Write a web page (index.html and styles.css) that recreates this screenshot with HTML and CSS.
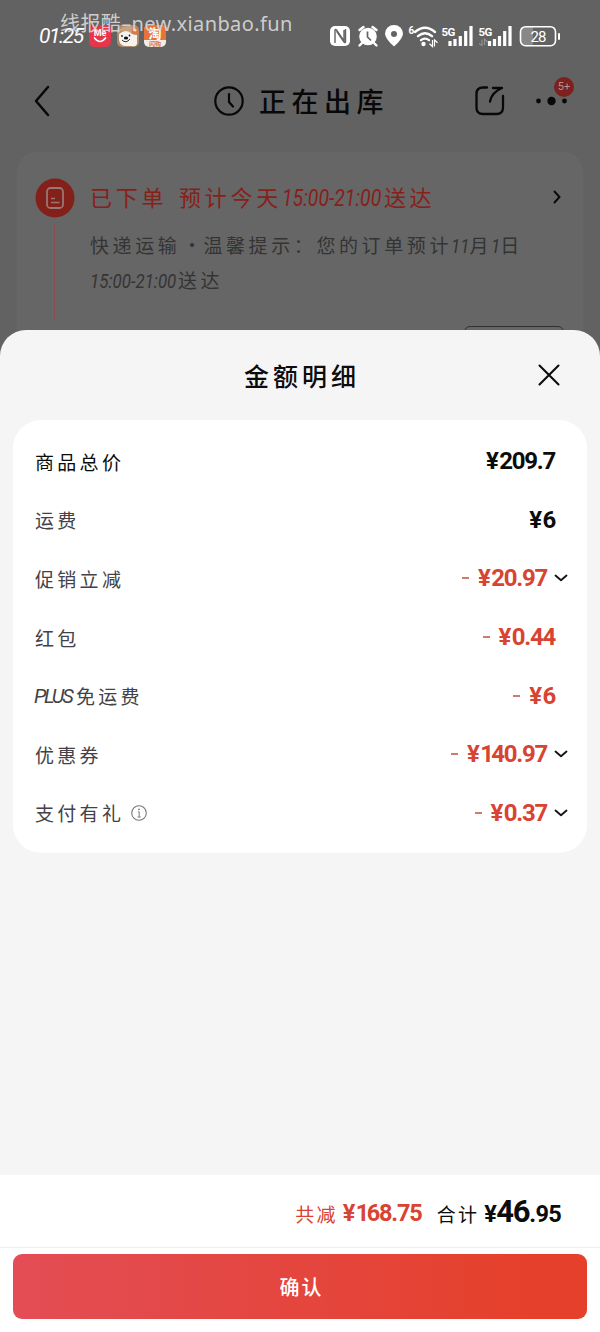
FILE: index.html
```
<!DOCTYPE html>
<html lang="zh-CN">
<head>
<meta charset="utf-8">
<title>金额明细</title>
<link rel="stylesheet" href="styles.css">
</head>
<body>
<div class="page">
  <div class="backdrop">
    <div class="status">
      <span class="time">01:25</span>
      <svg class="app" viewBox="0 0 22 22"><rect width="22" height="22" rx="5" fill="#e5364a"/><path d="M5.500 13q5.500 7 11 0" fill="none" stroke="#fff" stroke-width="1.700" stroke-linecap="round"/><text x="11" y="11" text-anchor="middle" class="t-me">Me</text></svg>
      <svg class="app app-dog" viewBox="0 0 22 22"><rect width="22" height="22" rx="5" fill="#ae8a68"/><path d="M1 7Q4 0 14 1l5 5-3 3Q8 4 1 7z" fill="#c7a37f"/><path d="M2 9q7-6 13 0l5 1v9q-1 3-5 2H9Q3 21 2 15z" fill="#f5f3ef"/><circle cx="18" cy="6" r="3.500" fill="#dc7846"/><circle cx="18" cy="5" r="1.500" fill="#f2d9b8"/><ellipse cx="9" cy="13" rx="2.200" ry="1.500" fill="#111"/><circle cx="5" cy="11" r=".9" fill="#222"/><circle cx="12.500" cy="10.500" r=".9" fill="#222"/><path d="M5 15q4 4 8-1" stroke="#333" fill="none"/></svg>
      <svg class="app" viewBox="0 0 22 22"><rect width="22" height="22" rx="5" fill="#f4ece5"/><path d="M0 15V5q0-5 5-5h12q5 0 5 5v10z" fill="#e8733a"/><text x="11" y="12.500" text-anchor="middle" class="t-tao">淘</text><text x="11" y="20.500" text-anchor="middle" class="t-flash">闪购</text></svg>
      <svg class="signals" viewBox="0 0 236 28">
        <g fill="#fff">
          <rect x="1" y="4" width="20" height="20" rx="5"/>
          <path d="M6 21V8.500q0-2 1.500-.5l7.500 11V8M16.500 7v12.500q0 2-1.500.5L7.500 9" fill="none" stroke="#636363" stroke-width="1.400"/>
          <circle cx="39" cy="14.500" r="8.800"/>
          <path d="M30.500 8l4-3M47.500 8l-4-3M33 21l-2.500 2.500M45 21l2.500 2.500" stroke="#fff" stroke-width="2.400" stroke-linecap="round"/>
          <path d="M38.500 9.500v5.500l3.500 3.500" fill="none" stroke="#636363" stroke-width="1.700"/>
          <path d="M65 24.500q-9-8-9-13a9 8.500 0 0 1 18 0q0 5-9 13z"/><circle cx="65" cy="12" r="3" fill="#636363"/>
          <text x="79.500" y="12" class="t-six">6</text>
          <path d="M86 10q10-8.500 20 0M89 14.200q7-6 14 0M92 18.200q4-3.200 8 0" fill="none" stroke="#fff" stroke-width="2.300" stroke-linecap="round"/>
          <circle cx="94.500" cy="22" r="2.200"/><path d="M103.500 18v6.500l-3-2.800M105.500 24.500V18l3 2.800" fill="none" stroke="#fff" stroke-width="1.200"/>
          <text x="112.500" y="13.500" class="t-5g">5G</text>
          <path d="M121 24v-5M126 24v-7M131.300 24V14M136.700 24v-15M142 24V4" stroke="#fff" stroke-width="3.200"/>
          <text x="149.500" y="13.500" class="t-5g">5G</text>
          <path d="M160.500 24v-5M165.500 24v-7M170.500 24V14M175.700 24v-15M181 24V4" stroke="#fff" stroke-width="3.200"/>
          <path d="M153 17.500v6l-3-2M155.500 23v-6l3 3" fill="none" stroke="#929292" stroke-width="1.200"/>
          <path d="M196 5h8v18h-8q-4 0-4-4V9q0-4 4-4z" fill="#888"/>
          <rect x="191.500" y="4.700" width="35" height="19" rx="5" fill="none" stroke="#fff" stroke-width="1.600"/>
          <rect x="229" y="11" width="2" height="7" rx="1"/>
          <text x="209" y="20" text-anchor="middle" class="t-battery">28</text>
        </g>
      </svg>
    </div>
    <div class="watermark">线报酷–new.xianbao.fun</div>
    <header class="nav">
      <svg class="back" viewBox="0 0 16 32"><path d="M14 2L2 16l12 14" fill="none" stroke="#080808" stroke-width="2.500" stroke-linecap="round" stroke-linejoin="round"/></svg>
      <svg class="clock" viewBox="0 0 30 30"><circle cx="15" cy="15" r="13.700" fill="none" stroke="#080808" stroke-width="2.200"/><path d="M15 8v8l4 4.500" fill="none" stroke="#080808" stroke-width="2.200" stroke-linecap="round"/></svg>
      <h1 class="nav-title">正在出库</h1>
      <svg class="share" viewBox="0 0 30 30"><path d="M12 1.500H8Q1.500 1.500 1.500 8v13.500Q1.500 28 8 28h13.500Q28 28 28 21.500V10M18 2H27Q17 6 15 15.500" fill="none" stroke="#080808" stroke-width="2.300" stroke-linecap="round" stroke-linejoin="round"/></svg>
      <div class="more"><svg viewBox="0 0 34 10"><circle cx="3.500" cy="5" r="2.400"/><circle cx="16.500" cy="5" r="4.200"/><circle cx="29.500" cy="5" r="2.400"/></svg><span class="badge">5+</span></div>
    </header>
    <section class="order">
      <div class="rail">
        <svg class="order-icon" viewBox="0 0 40 40"><circle cx="20" cy="20" r="19.500" fill="#822019"/><rect x="12" y="10" width="16" height="20" rx="3.500" fill="none" stroke="#997774" stroke-width="1.800"/><path d="M16 20.500h4M16 24.500h8.500" stroke="#997774" stroke-width="1.700"/></svg>
        <div class="rail-line"></div>
      </div>
      <div class="order-body">
        <div class="order-title">已下单<span class="space"></span>预计今天<span class="num">15:00-21:00</span>送达</div>
        <div class="order-text">快递运输<span class="dot">·</span>温馨提示：您的订单预计<span class="num month">11</span>月<span class="num day">1</span>日<br><span class="num range">15:00-21:00</span>送达</div>
        <div class="order-action"></div>
      </div>
      <svg class="go" viewBox="0 0 8 14"><path d="M1.500 1.500L6.500 7l-5 5.500" fill="none" stroke="#080808" stroke-width="1.900" stroke-linecap="round"/></svg>
    </section>
  </div>

  <main class="sheet">
    <div class="sheet-head">
      <h2 class="sheet-title">金额明细</h2>
      <svg class="close" viewBox="0 0 22 22"><path d="M1.500 1.500l19 19M20.500 1.500l-19 19" stroke="#0c0c0c" stroke-width="2.100" stroke-linecap="round"/></svg>
    </div>
    <div class="card">
      <div class="row first"><span class="label">商品总价</span><span class="amount"><span class="yen">¥</span>209.7</span></div>
      <div class="row"><span class="label">运费</span><span class="amount"><span class="yen">¥</span>6</span></div>
      <div class="row off fold"><span class="label">促销立减</span><i class="minus"></i><span class="amount"><span class="yen">¥</span>20.97</span><svg class="down" viewBox="0 0 14 8"><path d="M1.500 1.500L7 6.200l5.500-4.700" /></svg></div>
      <div class="row off"><span class="label">红包</span><i class="minus"></i><span class="amount"><span class="yen">¥</span>0.44</span></div>
      <div class="row off"><span class="label"><span class="plus">PLUS</span>免运费</span><i class="minus"></i><span class="amount"><span class="yen">¥</span>6</span></div>
      <div class="row off fold"><span class="label">优惠券</span><i class="minus"></i><span class="amount"><span class="yen">¥</span><span class="one">1</span>40.97</span><svg class="down" viewBox="0 0 14 8"><path d="M1.500 1.500L7 6.200l5.500-4.700" /></svg></div>
      <div class="row off fold"><span class="label">支付有礼<svg class="info" viewBox="0 0 16 16"><circle cx="8" cy="8" r="7.300" fill="none" stroke="#77777b" stroke-width="1.100"/><path d="M7 6.800h1.200v5M6.500 12h3.200" fill="none" stroke="#77777b"/><circle cx="8" cy="4.300" r=".9" fill="#77777b"/></svg></span><i class="minus"></i><span class="amount"><span class="yen">¥</span>0.37</span><svg class="down" viewBox="0 0 14 8"><path d="M1.500 1.500L7 6.200l5.500-4.700" /></svg></div>
    </div>
  </main>
  <footer class="footer">
    <div class="totals">
      <span class="sum-label saved">共减</span><span class="sum saved"><span class="yen">¥</span><span class="one">1</span>68.75</span>
      <span class="sum-label total">合计</span><span class="sum">¥<span class="big">46</span>.95</span>
    </div>
    <div class="confirm-wrap"><button class="confirm">确认</button></div>
  </footer>
</div>
</body>
</html>
```
FILE: styles.css
```
* { box-sizing: border-box; }
body { margin: 0; font-family: "Noto Sans CJK SC", sans-serif; color: #0c0c0c; }
h1, h2 { margin: 0; font-weight: 500; }
svg { display: block; flex: none; }
.page { width: 600px; height: 1332px; display: flex; flex-direction: column; overflow: hidden; background: #f5f5f5; }

/* dimmed order page */
.backdrop { position: relative; flex: none; height: 360px; background: #626262; overflow: hidden; }
.status { display: flex; align-items: center; height: 50px; padding: 22px 0 0 39px; }
.time { width: 50px; font: italic 21px/28px Roboto, sans-serif; letter-spacing: -1.4px; color: #fff; }
.app { width: 22px; height: 22px; margin-right: 5.500px; }
.signals { width: 236px; height: 28px; margin-left: 157px; }
.t-me { font: bold 9px Roboto, sans-serif; fill: #fff; }
.t-tao { font: bold 13px "Noto Sans CJK SC", sans-serif; fill: #fff; }
.t-flash { font: bold 6px "Noto Sans CJK SC", sans-serif; fill: #d9773f; }
.t-six { font: bold 10px Roboto, sans-serif; }
.t-5g { font: bold 11.500px Roboto, sans-serif; letter-spacing: -.7px; }
.t-battery { font: 15px Roboto, sans-serif; letter-spacing: -1px; }
.watermark { position: absolute; left: 60px; top: 9px; font: 20px/30px "Noto Sans", "Noto Sans CJK SC", sans-serif; letter-spacing: .38px; color: rgba(220, 220, 220, .9); white-space: nowrap; }
.nav { display: flex; align-items: center; height: 102px; padding-left: 34px; }
.back { width: 16px; height: 32px; }
.clock { width: 30px; height: 30px; margin-left: 164px; }
.nav-title { width: 216px; margin-left: 15px; font-size: 27px; line-height: 40px; letter-spacing: 5.500px; color: #080808; }
.share { width: 30px; height: 30px; }
.more { position: relative; width: 34px; margin-left: 30px; }
.more svg { width: 34px; height: 10px; fill: #080808; }
.badge { position: absolute; left: 19px; top: -19px; width: 20px; height: 20px; border-radius: 10px; background: #7c211e; color: #b39391; font: 11px/20px Roboto, sans-serif; text-align: center; }
.order { display: flex; height: 230px; margin: 0 17px; border-radius: 20px; background: #666; }
.rail { flex: none; width: 40px; margin: 26px 0 0 18px; display: flex; flex-direction: column; align-items: center; }
.order-icon { width: 40px; height: 40px; }
.rail-line { flex: none; width: 1px; height: 97px; margin: 5px 1px 0 0; background: #85504d; }
.order-body { flex: none; width: 450px; padding: 25px 0 0 15px; white-space: nowrap; }
.order-title { font-size: 22px; line-height: 38px; letter-spacing: 3.700px; color: #88201a; }
.space { display: inline-block; width: 12px; }
.num { display: inline-block; font: italic 20px Roboto, sans-serif; letter-spacing: 0; transform: scaleX(.845); transform-origin: 0 50%; }
.order-title .num { width: 102px; font-size: 23px; }
.order-text { margin-top: 12px; font-size: 19px; line-height: 35px; letter-spacing: 3.600px; color: #343434; }
.month { width: 18.500px; margin-left: -1px; }
.day { width: 9px; margin-left: -1px; }
.range { width: 88px; }
.order-text .dot { display: inline-block; width: 23px; text-align: center; letter-spacing: 0; }
.order-action { width: 100px; height: 40px; margin: 29px 0 0 374px; border: 1.500px solid #303030; border-radius: 6px; }
.go { width: 8px; height: 14px; margin: 38px 0 0 -4px; margin-left: 13px; transform: none; }
.order .go { margin-left: auto; margin-right: 22px; }
.order-body { margin-right: -20px; }

/* amount sheet */
.sheet { position: relative; flex: 1; margin-top: -30px; border-radius: 26px 26px 0 0; background: #f5f5f5; padding: 0 13px; }
.sheet-head { display: flex; justify-content: flex-end; align-items: center; height: 90px; padding-right: 27px; }
.sheet-title { width: 294px; font-size: 25px; letter-spacing: 4px; }
.close { width: 22px; height: 22px; }
.card { height: 433px; padding: 12px 32px 0 22px; border-radius: 28px; background: #fff; }
.row { display: flex; align-items: center; height: 58.600px; }
.row.fold { margin-right: -13px; }
.label { display: flex; align-items: center; margin-right: auto; font-size: 19px; letter-spacing: 3.300px; color: #424247; }
.first .label { color: #0c0c0c; }
.plus { width: 42px; margin-left: -1px; font: italic 20px Roboto, sans-serif; letter-spacing: -2.200px; }
.amount { font: bold 24px/30px Roboto, sans-serif; letter-spacing: -1.250px; }
.yen { margin-right: 1.500px; }
.one { margin-right: -1.500px; }
.off .amount { color: #d84332; }
.minus { width: 7px; height: 2px; margin-right: 9px; background: #cf7e65; }
.down { width: 14px; height: 8px; margin-left: 7px; fill: none; stroke: #151515; stroke-width: 1.900; stroke-linecap: round; stroke-linejoin: round; }
.info { width: 16px; height: 16px; margin-left: 7px; }

/* totals and confirm */
.footer { flex: none; height: 157px; background: #fff; }
.totals { display: flex; align-items: center; justify-content: flex-end; height: 73px; padding: 4px 39px 0 0; border-bottom: 1px solid #eee; }
.sum-label { font-size: 19px; letter-spacing: 2.300px; }
.sum-label.total { margin-left: 15px; }
.sum { display: flex; align-items: baseline; margin-left: 5px; font: bold 23.500px/34px Roboto, sans-serif; letter-spacing: -.7px; }
.sum.saved { letter-spacing: -1.150px; }
.saved { color: #d84332; }
.big { font-size: 31px; letter-spacing: -1.200px; }
.confirm-wrap { padding: 6px 13px 0; }
.confirm { width: 100%; height: 65px; padding: 0 0 0 3px; border: 0; border-radius: 9px; background: linear-gradient(90deg, #e34d55, #e5402b 90%); color: #fff; font: 500 20px "Noto Sans CJK SC", sans-serif; letter-spacing: 2px; }
```
